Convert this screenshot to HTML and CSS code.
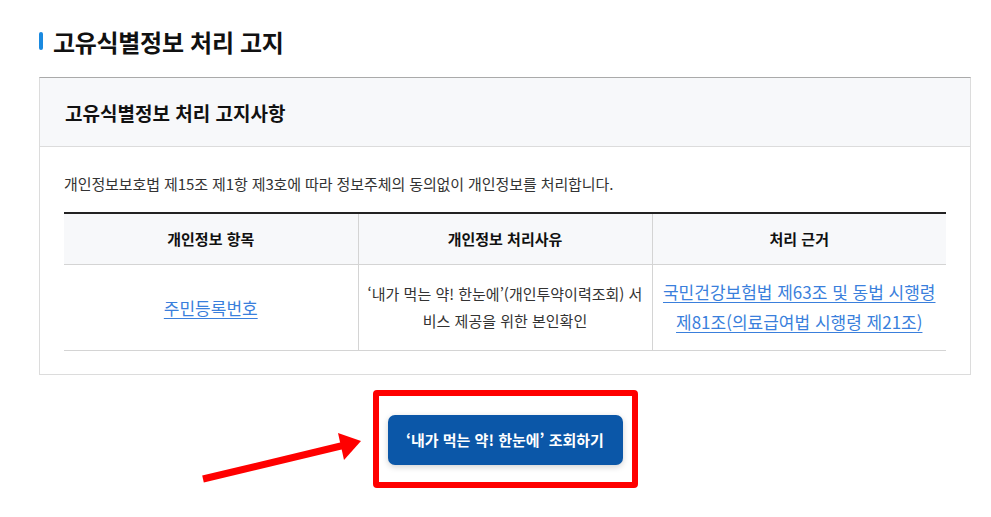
FILE: index.html
```html
<!DOCTYPE html>
<html lang="ko">
<head>
<meta charset="utf-8">
<link rel="stylesheet" href="styles.css">
</head>
<body>
<div class="page">
  <h2 class="section-title"><span class="bar"></span>고유식별정보 처리 고지</h2>
  <div class="notice">
    <div class="notice-head">고유식별정보 처리 고지사항</div>
    <div class="notice-body">
      <p class="desc">개인정보보호법 제15조 제1항 제3호에 따라 정보주체의 동의없이 개인정보를 처리합니다.</p>
      <table class="info">
        <thead>
          <tr><th>개인정보 항목</th><th>개인정보 처리사유</th><th>처리 근거</th></tr>
        </thead>
        <tbody>
          <tr>
            <td><a class="link" href="#">주민등록번호</a></td>
            <td class="reason">‘내가 먹는 약! 한눈에’(개인투약이력조회) 서비스 제공을 위한 본인확인</td>
            <td class="basis"><a class="link" href="#">국민건강보험법 제63조 및 동법 시행령 제81조(의료급여법 시행령 제21조)</a></td>
          </tr>
        </tbody>
      </table>
    </div>
  </div>
  <div class="action">
    <div class="highlight">
      <button class="btn">‘내가 먹는 약! 한눈에’ 조회하기</button>
    </div>
  </div>
  <svg class="arrow" width="991" height="517" viewBox="0 0 991 517">
    <line x1="203" y1="479" x2="345" y2="445" stroke="#ff0000" stroke-width="7"/>
    <polygon points="361,441 338,433 344,460" fill="#ff0000"/>
  </svg>
</div>
</body>
</html>
```
FILE: styles.css
```css
* { box-sizing: border-box; }
html, body { margin: 0; padding: 0; background: #fff; }
body {
  font-family: "Noto Sans CJK KR", "Noto Sans", sans-serif;
  color: #222;
}
.page {
  position: relative;
  width: 991px;
  height: 517px;
  padding: 26px 20px 0 39px;
}
.section-title {
  display: flex;
  align-items: center;
  gap: 10px;
  margin: 0;
  height: 30px;
  font-size: 24px;
  font-weight: 700;
  color: #111;
  letter-spacing: -0.3px;
}
.bar {
  width: 4px;
  height: 18px;
  border-radius: 2px;
  background: #1a8ae0;
}
.notice {
  margin-top: 21px;
  border: 1px solid #dcdcdc;
  border-top: 1px solid #aaaaaa;
}
.notice-head {
  height: 69px;
  display: flex;
  align-items: center;
  padding-left: 25px;
  background: #f7f8fa;
  border-bottom: 1px solid #dcdcdc;
  font-size: 19px;
  font-weight: 700;
  color: #111;
}
.notice-body {
  padding: 24px 24px 23px 24px;
}
.desc {
  margin: 0;
  font-size: 15px;
  line-height: 26px;
  color: #333;
  letter-spacing: -0.1px;
}
.info {
  margin-top: 15px;
  width: 100%;
  border-collapse: collapse;
  table-layout: fixed;
  border-top: 2px solid #222;
}
.info th {
  height: 51px;
  background: #f7f8fa;
  font-size: 15px;
  font-weight: 700;
  color: #111;
  border-bottom: 1px solid #d4d4d4;
  border-left: 1px solid #d4d4d4;
}
.info td {
  height: 86px;
  text-align: center;
  border-bottom: 1px solid #d4d4d4;
  border-left: 1px solid #d4d4d4;
  padding: 0 10px;
}
.info th:first-child, .info td:first-child { border-left: none; }
.info td.reason {
  font-size: 15px;
  line-height: 27px;
  color: #333;
  word-break: break-all;
  padding: 0 7px;
}
.basis { line-height: 30px; }
.link {
  font-size: 17px;
  color: #3a7fdc;
  text-decoration: underline;
  text-underline-offset: 3px;
}
.action {
  display: flex;
  justify-content: center;
  margin-top: 15px;
}
.highlight {
  border: 6px solid #ff0000;
  border-radius: 4px;
  padding: 19px 9px 17px 9px;
}
.btn {
  width: 235px;
  height: 50px;
  border: none;
  border-radius: 7px;
  background: #0b57a8;
  color: #fff;
  font-family: "Noto Sans CJK KR", "Noto Sans", sans-serif;
  font-size: 15px;
  font-weight: 700;
  box-shadow: 0 2px 6px rgba(0,0,0,0.18);
}
.arrow {
  position: absolute;
  left: 0;
  top: 0;
  pointer-events: none;
}
```
